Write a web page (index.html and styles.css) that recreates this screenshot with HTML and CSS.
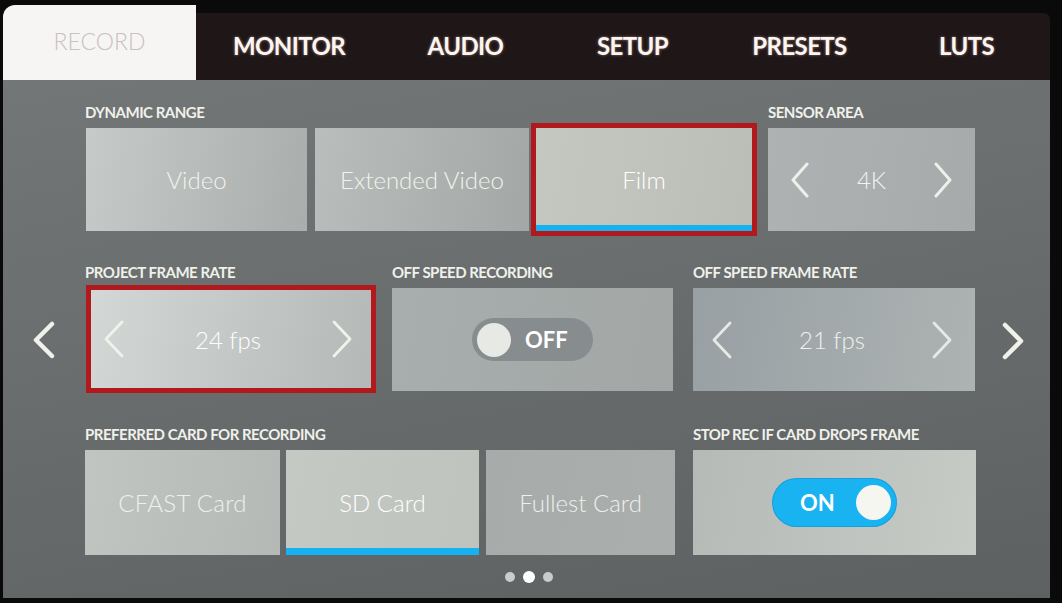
FILE: index.html
```html
<!DOCTYPE html>
<html>
<head>
<meta charset="utf-8">
<link rel="stylesheet" href="styles.css">
</head>
<body>
<div class="screen">
  <header class="tabs">
    <div class="tab-active">RECORD</div>
    <nav class="tab-bar">
      <span>MONITOR</span>
      <span>AUDIO</span>
      <span>SETUP</span>
      <span>PRESETS</span>
      <span>LUTS</span>
    </nav>
  </header>
  <main class="panel">
    <div class="nav nav-left">
      <svg class="nav-chev" width="24" height="38" viewBox="0 0 24 38"><path d="M20 3 L4 19 L20 35" fill="none" stroke="#f0f1ea" stroke-width="4.5" stroke-linecap="round" stroke-linejoin="round"/></svg>
    </div>
    <div class="content">
      <div class="row">
        <div class="field">
          <div class="label">DYNAMIC RANGE</div>
          <div class="options">
            <div class="card c-video">Video</div>
            <div class="card c-ext">Extended Video</div>
            <div class="card c-film selected outlined">Film</div>
          </div>
        </div>
        <div class="field f-sensor">
          <div class="label">SENSOR AREA</div>
          <div class="card stepper c-sensor">
            <svg class="chev" width="20" height="36" viewBox="0 0 20 36"><path d="M17 2 L3 18 L17 34" fill="none" stroke="#eef0ea" stroke-width="3" stroke-linecap="round" stroke-linejoin="round"/></svg>
            <span>4K</span>
            <svg class="chev" width="20" height="36" viewBox="0 0 20 36"><path d="M3 2 L17 18 L3 34" fill="none" stroke="#eef0ea" stroke-width="3" stroke-linecap="round" stroke-linejoin="round"/></svg>
          </div>
        </div>
      </div>

      <div class="row row2">
        <div class="field f-project">
          <div class="label">PROJECT FRAME RATE</div>
          <div class="card stepper c-project outlined thick">
            <svg class="chev" width="22" height="38" viewBox="0 0 22 38"><path d="M19 2 L3 19 L19 36" fill="none" stroke="#f1f2ea" stroke-width="2.8" stroke-linecap="round" stroke-linejoin="round"/></svg>
            <span>24 fps</span>
            <svg class="chev" width="22" height="38" viewBox="0 0 22 38"><path d="M3 2 L19 19 L3 36" fill="none" stroke="#f1f2ea" stroke-width="2.8" stroke-linecap="round" stroke-linejoin="round"/></svg>
          </div>
        </div>
        <div class="field f-offrec">
          <div class="label">OFF SPEED RECORDING</div>
          <div class="card c-offrec">
            <div class="toggle off"><span class="knob"></span><span class="ttext">OFF</span></div>
          </div>
        </div>
        <div class="field f-offrate">
          <div class="label">OFF SPEED FRAME RATE</div>
          <div class="card stepper c-offrate">
            <svg class="chev" width="22" height="38" viewBox="0 0 22 38"><path d="M19 2 L3 19 L19 36" fill="none" stroke="#e6eae4" stroke-width="2.8" stroke-linecap="round" stroke-linejoin="round"/></svg>
            <span>21 fps</span>
            <svg class="chev" width="22" height="38" viewBox="0 0 22 38"><path d="M3 2 L19 19 L3 36" fill="none" stroke="#e6eae4" stroke-width="2.8" stroke-linecap="round" stroke-linejoin="round"/></svg>
          </div>
        </div>
      </div>

      <div class="row row3">
        <div class="field">
          <div class="label">PREFERRED CARD FOR RECORDING</div>
          <div class="options">
            <div class="card c-cfast">CFAST Card</div>
            <div class="card c-sd selected">SD Card</div>
            <div class="card c-fullest">Fullest Card</div>
          </div>
        </div>
        <div class="field f-stop">
          <div class="label">STOP REC IF CARD DROPS FRAME</div>
          <div class="card c-stop">
            <div class="toggle on"><span class="ttext">ON</span><span class="knob"></span></div>
          </div>
        </div>
      </div>

      <div class="dots">
        <span class="dot"></span><span class="dot active"></span><span class="dot"></span>
      </div>
    </div>
    <div class="nav nav-right">
      <svg class="nav-chev" width="24" height="38" viewBox="0 0 24 38"><path d="M4 3 L20 19 L4 35" fill="none" stroke="#f0f1ea" stroke-width="4.5" stroke-linecap="round" stroke-linejoin="round"/></svg>
    </div>
  </main>
</div>
</body>
</html>
```

FILE: styles.css
```css
* { box-sizing: border-box; }

html, body {
  margin: 0;
  padding: 0;
}

body {
  width: 1062px;
  height: 603px;
  overflow: hidden;
  background: #0b0a0a;
  font-family: Lato, "Open Sans", "Liberation Sans", sans-serif;
}

.screen {
  margin: 5px 0 0 3px;
  width: 1047px;
}

/* ---------- tabs ---------- */
.tabs {
  display: flex;
  height: 75px;
}

.tab-active {
  width: 194px;
  background: #f6f5f4;
  border-radius: 12px 0 0 0;
  display: flex;
  align-items: center;
  justify-content: center;
  font-size: 23px;
  font-weight: 300;
  color: #c7c1c1;
  padding-bottom: 3px;
}

.tab-bar {
  flex: 1;
  margin-top: 8px;
  background: #1f1618;
  border-top-right-radius: 6px;
  display: grid;
  grid-template-columns: 186px repeat(4, 167px);
  align-items: center;
  padding-bottom: 2px;
}

.tab-bar span {
  text-align: center;
  font-size: 24px;
  font-weight: 700;
  letter-spacing: -0.6px;
  color: #fbf6f2;
  text-shadow: 0 0 3px rgba(255, 210, 190, 0.55);
}

/* ---------- panel ---------- */
.panel {
  display: flex;
  height: 518px;
  background: linear-gradient(170deg, #727677 0%, #696d6e 45%, #5d6162 100%);
}

.nav {
  display: flex;
  align-items: center;
  justify-content: center;
}

.nav-left { width: 82px; padding-top: 2px; }
.nav-right { width: 74px; padding-top: 4px; }

.content {
  width: 891px;
  padding-top: 24px;
}

.row {
  display: flex;
}

.row2 { margin-top: 33px; }
.row3 { margin-top: 35px; }

.field {
  display: flex;
  flex-direction: column;
}

.options {
  display: flex;
}

.label {
  height: 16px;
  line-height: 16px;
  margin-bottom: 8px;
  font-size: 15px;
  font-weight: 700;
  letter-spacing: -0.5px;
  color: #f0f1ea;
  white-space: nowrap;
}

.card {
  position: relative;
  height: 103px;
  display: flex;
  align-items: center;
  justify-content: center;
  font-size: 24px;
  font-weight: 300;
  color: #f2f3ee;
  background: linear-gradient(100deg, #c2c6c4, #a8acab);
}

.row3 .card { height: 105px; }

.stepper {
  justify-content: space-between;
  padding: 0 20px;
}

.selected::after {
  content: "";
  position: absolute;
  left: 0;
  right: 0;
  bottom: 0;
  height: 6px;
  background: #16b1f0;
}

.c-sd.selected::after { height: 7px; }

.outlined {
  outline: 5px solid #b2191d;
}

.c-film { color: #ffffff; }

/* row 1 */
.c-video { width: 221px; margin-left: 1px; background: linear-gradient(100deg, #c6cac8, #a9adac); }
.c-ext { width: 214px; margin-left: 8px; background: linear-gradient(100deg, #b9bdbb, #a3a7a6); }
.c-film { width: 216px; margin-left: 7px; background: linear-gradient(100deg, #c5c8c0, #bbbeb6); }
.f-sensor { margin-left: 16px; }
.c-sensor { width: 207px; padding: 0 22px; background: linear-gradient(100deg, #aeb2b2, #a6aaaa); }

/* row 2 */
.f-project { width: 286px; }
.c-project { width: 280px; height: 98px; margin: 2px 0 0 6px; padding: 0 18px 0 12px; background: linear-gradient(100deg, #d3d7d5, #b4b9b7); color: #ffffff; }
.f-offrec { margin-left: 21px; }
.c-offrec { width: 281px; background: linear-gradient(100deg, #a8adad, #a2a7a6); }
.f-offrate { margin-left: 20px; }
.c-offrate { width: 282px; padding: 0 22px 0 18px; background: linear-gradient(100deg, #98a0a4, #adb3b2); color: #eef1ec; }

/* row 3 */
.c-cfast { width: 195px; background: linear-gradient(100deg, #c1c5c2, #b5b9b6); color: #eef0ec; letter-spacing: 0.3px; }
.c-sd { width: 193px; margin-left: 6px; background: linear-gradient(100deg, #c5c9c4, #bfc3bd); color: #ffffff; }
.c-fullest { width: 189px; margin-left: 7px; background: linear-gradient(100deg, #a7abaa, #aaaeac); color: #eef0ec; }
.f-stop { margin-left: 18px; }
.c-stop { width: 283px; background: linear-gradient(100deg, #b6bab7, #c6cbc6); }

/* toggles */
.toggle {
  display: flex;
  align-items: center;
  border-radius: 24px;
  font-weight: 700;
  font-size: 22px;
  color: #ffffff;
}

.toggle.off {
  width: 121px;
  height: 43px;
  padding-left: 5px;
  background: #878c8e;
}

.toggle.off .knob {
  width: 34px;
  height: 34px;
  border-radius: 50%;
  background: #e7eae4;
}

.toggle.off .ttext {
  margin-left: 14px;
}

.toggle.on {
  width: 123px;
  height: 47px;
  padding: 0 5px 0 27px;
  justify-content: space-between;
  background: #18b3f0;
  box-shadow: 0 0 0 1px #12a2dc;
}

.toggle.on .knob {
  width: 35px;
  height: 35px;
  border-radius: 50%;
  background: #f4f6ef;
}

/* pager dots */
.dots {
  display: flex;
  justify-content: center;
  align-items: center;
  gap: 8px;
  margin-top: 16px;
  width: 891px;
  transform: translateX(-2px);
}

.dot {
  width: 10px;
  height: 10px;
  border-radius: 50%;
  background: #c9ccca;
}

.dot.active {
  width: 12px;
  height: 12px;
  background: #ffffff;
}
```
